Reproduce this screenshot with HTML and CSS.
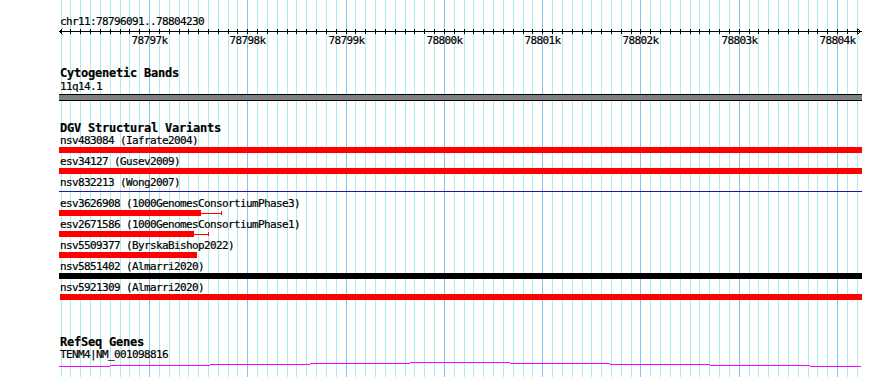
FILE: index.html
```html
<!DOCTYPE html>
<html>
<head>
<meta charset="utf-8">
<link rel="stylesheet" href="styles.css">
</head>
<body>
<div class="panel">
  <svg class="grid" id="grid" width="803" height="377"></svg>

  <section class="ruler">
    <div class="rlabel">chr11:78796091..78804230</div>
    <svg class="scale" width="803" height="20" viewBox="0 0 803 20">
      <rect x="0" y="3" width="803" height="1" fill="#000"/>
      <polyline points="3.5,0.5 0.5,3.5 3.5,6.5" fill="none" stroke="#000" stroke-width="1"/>
      <polyline points="798.5,0.5 801.5,3.5 798.5,6.5" fill="none" stroke="#000" stroke-width="1"/>
      <g id="ticks"></g>
    </svg>
  </section>

  <section class="track cyto">
    <div class="ttitle">Cytogenetic Bands</div>
    <div class="flabel">11q14.1</div>
    <div class="band"></div>
  </section>

  <section class="track dgv">
    <div class="ttitle">DGV Structural Variants</div>
    <div class="feat">
      <div class="flabel">nsv483084 (Iafrate2004)</div>
      <div class="ftrack"><div class="bar red full"></div></div>
    </div>
    <div class="feat">
      <div class="flabel">esv34127 (Gusev2009)</div>
      <div class="ftrack"><div class="bar red full"></div></div>
    </div>
    <div class="feat">
      <div class="flabel">nsv832213 (Wong2007)</div>
      <div class="ftrack"><div class="hline blue"></div></div>
    </div>
    <div class="feat">
      <div class="flabel">esv3626908 (1000GenomesConsortiumPhase3)</div>
      <div class="ftrack"><div class="bar red" style="width:142px"></div><div class="tail" style="width:20px"></div><div class="cap"></div></div>
    </div>
    <div class="feat">
      <div class="flabel">esv2671586 (1000GenomesConsortiumPhase1)</div>
      <div class="ftrack"><div class="bar red" style="width:135px"></div><div class="tail" style="width:14px"></div><div class="cap"></div></div>
    </div>
    <div class="feat">
      <div class="flabel">nsv5509377 (ByrskaBishop2022)</div>
      <div class="ftrack"><div class="bar red" style="width:138px"></div></div>
    </div>
    <div class="feat">
      <div class="flabel">nsv5851402 (Almarri2020)</div>
      <div class="ftrack"><div class="bar black full"></div></div>
    </div>
    <div class="feat">
      <div class="flabel">nsv5921309 (Almarri2020)</div>
      <div class="ftrack inset"><div class="bar red full"></div></div>
    </div>
  </section>

  <section class="track genes">
    <div class="ttitle">RefSeq Genes</div>
    <div class="flabel">TENM4|NM_001098816</div>
    <svg class="gene" width="803" height="6" viewBox="0 0 803 6">
      <rect x="0" y="5" width="51" height="1"/>
      <rect x="51" y="4" width="100" height="1"/>
      <rect x="151" y="3" width="100" height="1"/>
      <rect x="251" y="2" width="100" height="1"/>
      <rect x="351" y="1" width="100" height="1"/>
      <rect x="451" y="2" width="100" height="1"/>
      <rect x="551" y="3" width="100" height="1"/>
      <rect x="651" y="4" width="100" height="1"/>
      <rect x="751" y="5" width="51" height="1"/>
    </svg>
  </section>
</div>
<script src="script.js"></script>
</body>
</html>
```

FILE: styles.css
```css
html, body {
  margin: 0;
  background: #ffffff;
}
body {
  height: 377px;
  overflow: hidden;
}
.panel {
  position: relative;
  z-index: 0;
  margin-left: 59px;
  width: 803px;
  height: 377px;
  font-family: "DejaVu Sans Mono", "Liberation Mono", monospace;
  font-size: 11px;
  letter-spacing: -0.62px;
  color: #000;
  -webkit-text-stroke: 0.2px #000;
}
.grid {
  position: absolute;
  top: 0;
  left: 0;
  z-index: -1;
}
.grid .minor { fill: #afeeee; }
.grid .major { fill: #87c3ec; }

.ruler {
  padding-top: 15px;
}
.rlabel {
  line-height: 13px;
  height: 13px;
  padding-left: 1px;
  white-space: nowrap;
}
.scale {
  display: block;
  overflow: visible;
}
.scale text {
  font-family: "DejaVu Sans Mono", "Liberation Mono", monospace;
  font-size: 11px;
  letter-spacing: -0.62px;
  fill: #000;
  stroke: #000;
  stroke-width: 0.2px;
}
.scale .tick { fill: #000; }

.ttitle {
  font-weight: bold;
  font-size: 12px;
  letter-spacing: -0.22px;
  line-height: 13px;
  height: 13px;
  padding-left: 1px;
  white-space: nowrap;
}
.flabel {
  line-height: 12px;
  height: 12px;
  padding-left: 1px;
  white-space: nowrap;
}
.cyto { margin-top: 19px; }
.cyto .flabel { margin-top: 1px; }
.band {
  margin-top: 1px;
  height: 5px;
  border-top: 1px solid #000;
  border-bottom: 1px solid #000;
  background: #808080;
}
.dgv { margin-top: 21px; }
.feat { height: 21px; }
.ftrack {
  display: flex;
  align-items: flex-start;
  height: 6px;
}
.ftrack.inset { padding-left: 1px; }
.bar { height: 6px; flex: none; }
.bar.full { flex: 1; }
.red { background: #ff0000; }
.black { background: #000000; }
.hline {
  flex: 1;
  height: 1px;
  margin-top: 2px;
}
.blue { background: #1a1aa8; }
.tail {
  flex: none;
  height: 1px;
  margin-top: 3px;
  background: #ff0000;
}
.cap {
  flex: none;
  width: 1px;
  height: 4px;
  margin-top: 1px;
  background: #ff0000;
}
.genes { margin-top: 33px; }
.gene { display: block; }
.gene rect { fill: #ff00ff; }
```

FILE: script.js
```js
(function () {
  var NS = 'http://www.w3.org/2000/svg';
  var start = 78796091;
  var scale = 0.098286;
  var origin = 0.7;
  function px(pos) { return Math.round(origin + (pos - start) * scale); }
  var grid = document.getElementById('grid');
  var ticks = document.getElementById('ticks');
  for (var p = 78796100; p <= 78804200; p += 100) {
    var x = px(p);
    var major = p % 1000 === 0;
    var r = document.createElementNS(NS, 'rect');
    r.setAttribute('x', x);
    r.setAttribute('y', 0);
    r.setAttribute('width', 1);
    r.setAttribute('height', 377);
    r.setAttribute('class', major ? 'major' : 'minor');
    grid.appendChild(r);
    var t = document.createElementNS(NS, 'rect');
    t.setAttribute('x', x);
    t.setAttribute('y', 1);
    t.setAttribute('width', 1);
    t.setAttribute('height', 5);
    t.setAttribute('class', 'tick');
    ticks.appendChild(t);
    if (major) {
      var lb = document.createElementNS(NS, 'text');
      lb.setAttribute('x', x + 0.5);
      lb.setAttribute('y', 16);
      lb.setAttribute('text-anchor', 'middle');
      lb.textContent = (p / 1000) + 'k';
      ticks.appendChild(lb);
    }
  }
})();
```
